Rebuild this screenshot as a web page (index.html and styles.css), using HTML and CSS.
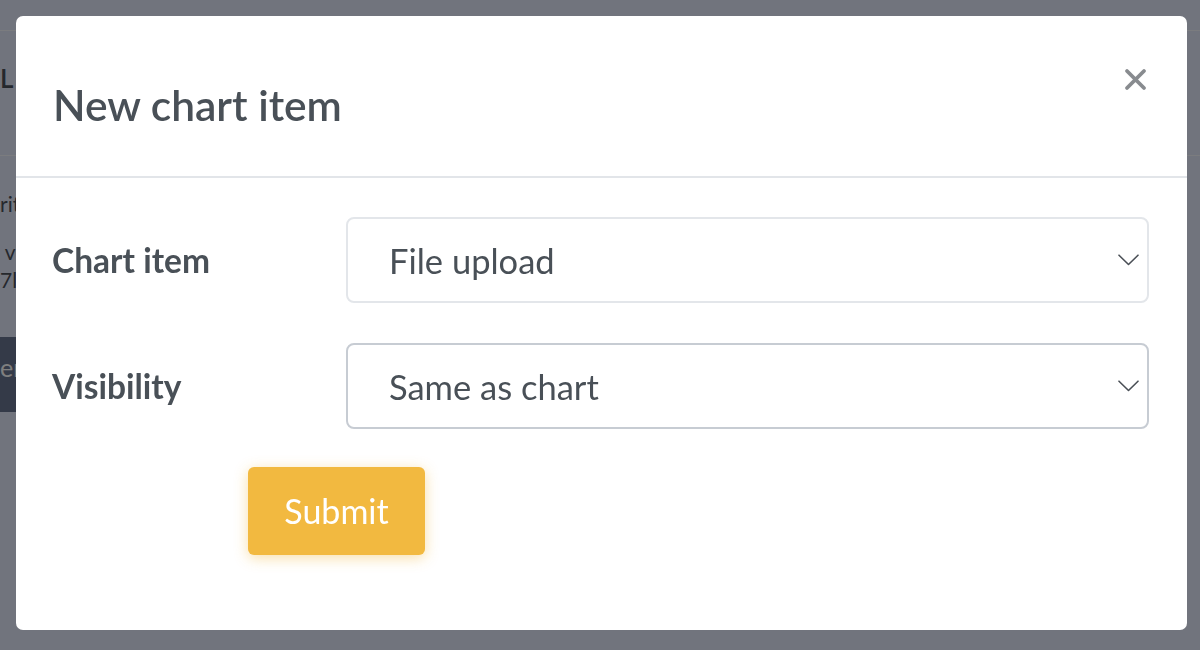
FILE: index.html
```html
<!DOCTYPE html>
<html lang="en">
<head>
<meta charset="utf-8">
<title>New chart item</title>
<link rel="stylesheet" href="styles.css">
</head>
<body>
<div class="page">
  <div class="bg-nav"></div>
  <div class="bg-title">L</div>
  <div class="bg-rule"></div>
  <p class="bg-para">rit</p>
  <p class="bg-para bg-para-2">&nbsp;v<br>7l</p>
  <div class="bg-button">er</div>
</div>

<div class="backdrop"></div>

<div class="modal-layer">
  <div class="modal">
    <div class="modal-header">
      <h2 class="modal-title">New chart item</h2>
      <button class="close-btn" type="button" aria-label="Close">
        <svg width="23" height="23" viewBox="0 0 23 23"><path d="M3 3 L20 20 M20 3 L3 20" stroke="#888b8f" stroke-width="3.8" stroke-linecap="round" fill="none"/></svg>
      </button>
    </div>
    <div class="modal-body">
      <div class="form-row">
        <div class="form-label">Chart item</div>
        <div class="select">
          <span class="select-text">File upload</span>
          <svg class="chevron" width="21" height="12" viewBox="0 0 21 12"><path d="M1 1.2 L10.5 10.5 L20 1.2" stroke="#4a4f56" stroke-width="1.6" fill="none" stroke-linecap="round" stroke-linejoin="round"/></svg>
        </div>
      </div>
      <div class="form-row">
        <div class="form-label">Visibility</div>
        <div class="select select-active">
          <span class="select-text">Same as chart</span>
          <svg class="chevron" width="21" height="12" viewBox="0 0 21 12"><path d="M1 1.2 L10.5 10.5 L20 1.2" stroke="#4a4f56" stroke-width="1.6" fill="none" stroke-linecap="round" stroke-linejoin="round"/></svg>
        </div>
      </div>
      <div class="actions">
        <button class="submit-btn" type="button">Submit</button>
      </div>
    </div>
  </div>
</div>
</body>
</html>
```

FILE: styles.css
```css
* { box-sizing: border-box; }

html, body {
  margin: 0;
  padding: 0;
  width: 1200px;
  height: 650px;
  overflow: hidden;
}

body {
  font-family: "Lato", "Liberation Sans", sans-serif;
  background: #e3e9fb;
  color: #495057;
}

/* background page (dimmed by the backdrop) */
.page {
  width: 1200px;
}
.bg-nav {
  height: 31px;
  border-bottom: 1px solid #f6f8ff;
}
.bg-title {
  height: 124px;
  padding-top: 33px;
  font-size: 26px;
  line-height: 28px;
  font-weight: 600;
  color: #4a505a;
}
.bg-rule {
  border-top: 1px solid #f6f8ff;
}
.bg-para {
  margin: 34px 0 0 0;
  font-size: 21px;
  line-height: 28px;
  color: #4a505a;
}
.bg-para-2 {
  margin-top: 20px;
}
.bg-button {
  margin-top: 43px;
  width: 160px;
  height: 75px;
  padding: 16px 0 0 0;
  font-size: 25px;
  line-height: 28.8px;
  color: #ffffff;
  background: #687490;
}

.backdrop {
  position: fixed;
  inset: 0;
  background: rgba(0, 0, 0, 0.5);
}

.modal-layer {
  position: fixed;
  inset: 0;
  padding: 16px 13px 0 16px;
}

.modal {
  background: #ffffff;
  border-radius: 7px;
  overflow: hidden;
}

.modal-header {
  display: flex;
  justify-content: space-between;
  align-items: flex-start;
  padding: 52px 40px 0 37px;
  border-bottom: 2px solid #e2e5e9;
}

.modal-title {
  margin: 12px 0 46px 0;
  font-size: 42.5px;
  line-height: 50px;
  font-weight: 600;
  color: #495057;
}

.close-btn {
  width: 23px;
  height: 23px;
  padding: 0;
  border: 0;
  background: transparent;
  display: flex;
}

.modal-body {
  padding: 39px 38px 75px 36px;
  display: flex;
  flex-direction: column;
  gap: 40px;
}

.form-row {
  display: flex;
  align-items: center;
}

.form-label {
  width: 294px;
  font-size: 33.5px;
  font-weight: 700;
  color: #495057;
}

.select {
  flex: 1;
  height: 86px;
  border: 2px solid #e3e6ea;
  border-radius: 8px;
  display: flex;
  align-items: center;
  justify-content: space-between;
  padding: 0 8px 0 41px;
}

.select-active {
  border-color: #c7ccd3;
}

.select-text {
  font-size: 34.5px;
  color: #495057;
}

.chevron {
  display: block;
}

.actions {
  padding-left: 196px;
  margin-top: -2px;
}

.submit-btn {
  width: 177px;
  height: 88px;
  border: 0;
  border-radius: 6px;
  background: #f2b940;
  color: #ffffff;
  font-family: "Lato", "Liberation Sans", sans-serif;
  font-size: 34px;
  padding-bottom: 2px;
  box-shadow: 0 3px 14px rgba(242, 185, 64, 0.45);
}
```
